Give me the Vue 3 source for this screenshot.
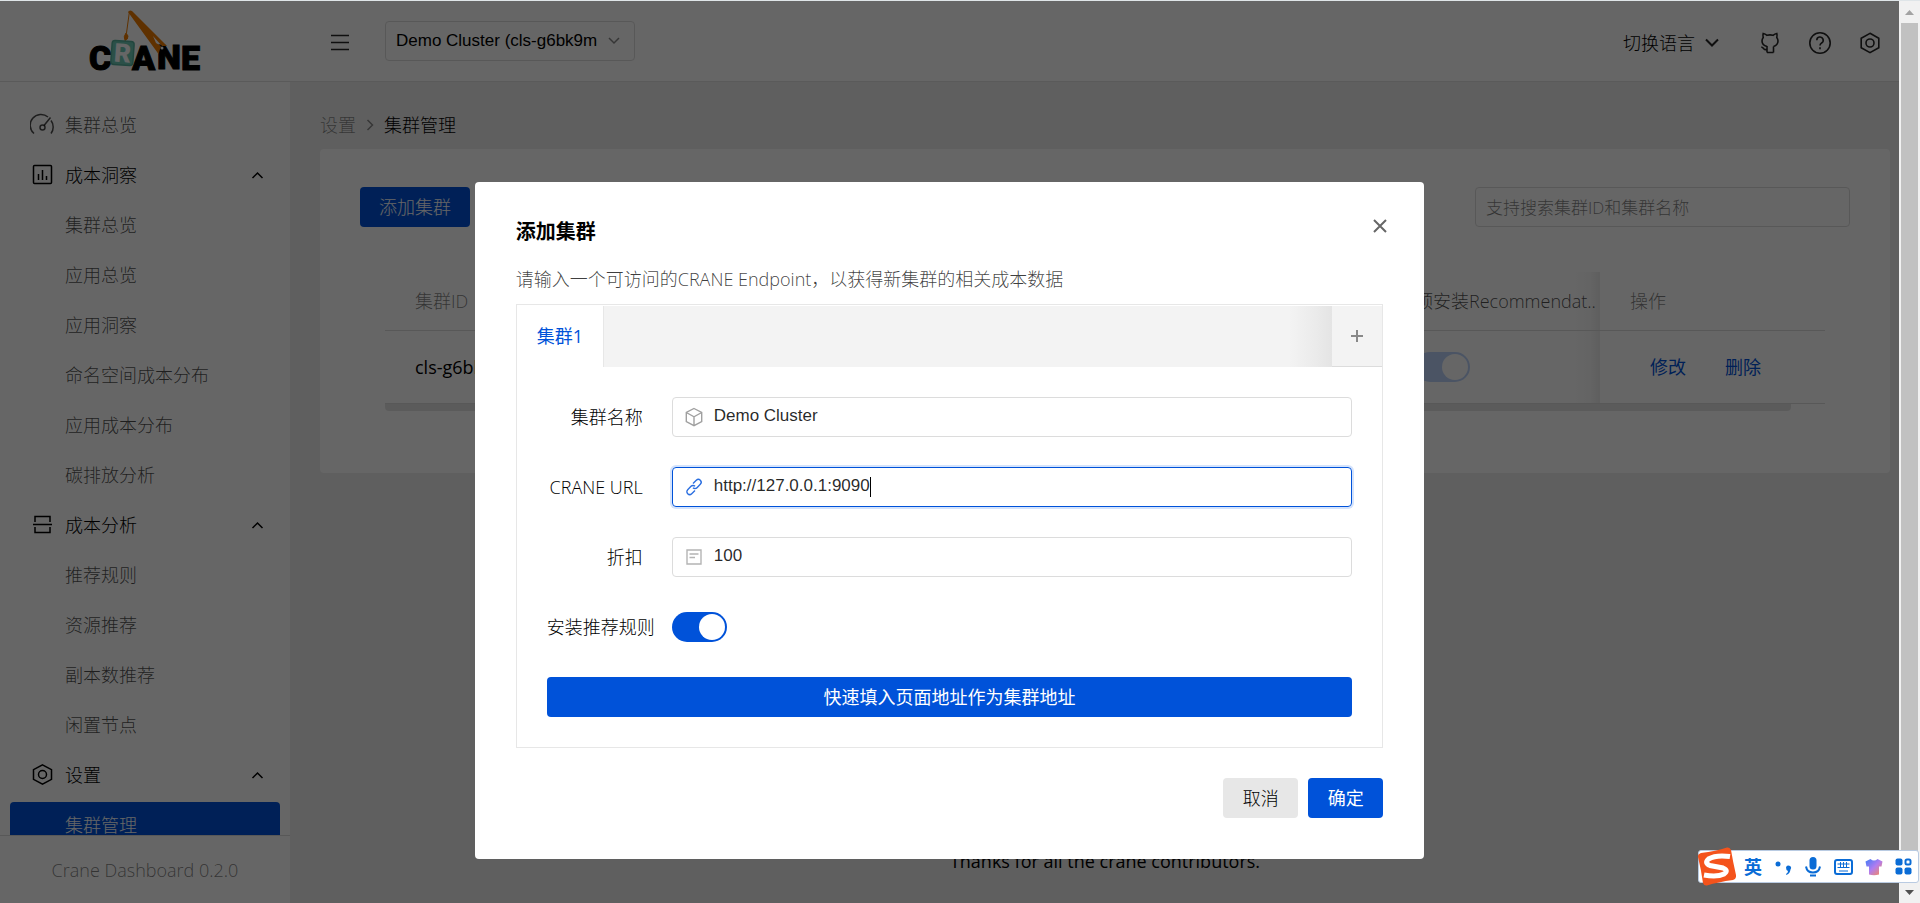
<script setup>
import { ref } from 'vue'

const menu = [
  { label: '集群总览', icon: 'gauge' },
  { label: '成本洞察', icon: 'chart', group: true },
  { label: '集群总览' },
  { label: '应用总览' },
  { label: '应用洞察' },
  { label: '命名空间成本分布' },
  { label: '应用成本分布' },
  { label: '碳排放分析' },
  { label: '成本分析', icon: 'curtain', group: true },
  { label: '推荐规则' },
  { label: '资源推荐' },
  { label: '副本数推荐' },
  { label: '闲置节点' },
  { label: '设置', icon: 'setting', group: true },
  { label: '集群管理', active: true },
]

const name = ref('Demo Cluster')
const url = ref('http://127.0.0.1:9090')
const discount = ref('100')
const install = ref(true)
</script>

<template>
  <div class="window">
    <div class="page">
      <header class="header">
        <a class="brand" href="#" aria-label="CRANE">
          <svg width="112" height="72" viewBox="0 0 112 72">
            <g class="letters">
              <text x="0" y="65">C</text>
              <text x="43" y="65">A</text>
              <text x="68" y="64">N</text>
              <text x="92" y="65">E</text>
            </g>
            <path d="M40.500 6 L37.500 28 M37 28 q-3 4 -1 7 q3 0 3 -4 z M36 35 q-1 3 4 4" fill="#ee7a00" stroke="#ee7a00" stroke-width="1" />
            <path d="M39 7 q1.500 -2.500 4 -1 L78 41 L73 41 L64 31 L67 38 L72 41 L69.500 49 z" fill="#ee7a00" />
            <circle cx="73" cy="43" r="1.500" fill="#fff" />
            <g transform="rotate(4 33 48)">
              <rect x="22.500" y="36" width="22" height="24" rx="3" fill="#6cc8b4" stroke="#55b09c" stroke-width="1.500" />
              <text class="r" x="25" y="57">R</text>
            </g>
          </svg>
        </a>
        <button class="icon-btn burger" aria-label="折叠菜单">
          <svg width="20" height="20" viewBox="0 0 20 20"><path d="M1 2.500h18M1 9.500h18M1 16.500h18" /></svg>
        </button>
        <div class="picker">
          <select aria-label="集群"><option>Demo Cluster (cls-g6bk9m</option></select>
          <svg width="14" height="10" viewBox="0 0 14 10"><path d="M2 2l5 5l5-5" /></svg>
        </div>
        <div class="tools">
          <button class="lang">
            切换语言
            <svg width="16" height="10" viewBox="0 0 16 10"><path d="M2 1.500l6 6l6-6" /></svg>
          </button>
          <button class="icon-btn" aria-label="GitHub">
            <svg width="24" height="24" viewBox="0 0 24 24">
              <path d="M9 21.500h6.500M9 21.500v-6.500M15.500 21.500v-6M9 15.500C5.500 14.500 4 12.500 4 10c0-1.500 .5-2.500 1.200-3.500C4.800 5 4.800 3.800 5.200 2.500C7 2.800 8 3.500 9 4.300c2-.5 4-.5 6 0c1-.8 2-1.500 3.800-1.800c.4 1.300 .4 2.500 0 4C19.500 7.500 20 8.500 20 10c0 2.500-1.500 4.500-4.500 5.500M9 18.500c-1.500 .3-2.500 .2-3.200-.8c-.6-.9-1-1.500-2.500-1.700" />
            </svg>
          </button>
          <button class="icon-btn" aria-label="帮助">
            <svg width="24" height="24" viewBox="0 0 24 24">
              <circle cx="12" cy="12" r="10.200" />
              <path d="M8.800 9.300a3.200 3.200 0 1 1 4.800 2.700c-1.200 .7-1.600 1.200-1.600 2.500M12 16.300v2" />
            </svg>
          </button>
          <button class="icon-btn" aria-label="页面设置">
            <svg width="24" height="24" viewBox="0 0 24 24">
              <path d="M12 2.300l8.800 4.900v9.600L12 21.700l-8.800-4.900V7.200z" /><circle cx="12" cy="12" r="4" />
            </svg>
          </button>
        </div>
      </header>

      <aside class="sidebar">
        <nav class="menu">
          <a
            v-for="(item, i) in menu"
            :key="i"
            href="#"
            class="item"
            :class="{ group: item.group, active: item.active, sub: !item.icon }"
          >
            <svg v-if="item.icon" class="glyph" width="25" height="25" viewBox="0 0 25 25">
              <g v-if="item.icon === 'gauge'">
                <path d="M4 21.500a10.700 10.700 0 0 1 14-16.500M21 8.500a10.700 10.700 0 0 1 0 13M14 13.500l6.500-8" />
                <circle cx="12.500" cy="15.500" r="2.500" />
              </g>
              <g v-else-if="item.icon === 'chart'">
                <rect x="3.500" y="3.500" width="18" height="18" rx="1" />
                <path d="M8.500 12v6M12.500 8v10M16.500 14v4" />
              </g>
              <g v-else-if="item.icon === 'curtain'">
                <path d="M3 12.500h19M5 10V4.500h15V10M5 15v5.500h15V15" />
              </g>
              <g v-else>
                <path d="M12.500 2.800l9 4.900v9.600l-9 4.900l-9-4.900V7.700z" /><circle cx="12.500" cy="12.500" r="4" />
              </g>
            </svg>
            <span>{{ item.label }}</span>
            <svg v-if="item.group" class="fold" width="25" height="12" viewBox="0 0 25 12"><path d="M7.500 9l5-5l5 5" /></svg>
          </a>
        </nav>
        <div class="version">Crane Dashboard 0.2.0</div>
      </aside>

      <main class="content">
        <nav class="crumbs">
          <a href="#">设置</a>
          <svg width="10" height="14" viewBox="0 0 10 14"><path d="M2.500 2l5 5l-5 5" /></svg>
          <span>集群管理</span>
        </nav>
        <section class="card">
          <div class="bar">
            <button class="btn primary">添加集群</button>
            <input class="search" type="text" placeholder="支持搜索集群ID和集群名称" aria-label="搜索集群" />
          </div>
          <div class="table-wrap">
            <table>
              <thead>
                <tr>
                  <th>集群ID</th>
                  <th class="wide">预安装Recommendat..</th>
                  <th class="ops">操作</th>
                </tr>
              </thead>
              <tbody>
                <tr>
                  <td>cls-g6bk9m</td>
                  <td class="wide"><input type="checkbox" class="switch" checked disabled aria-label="预安装" /></td>
                  <td class="ops"><a href="#">修改</a><a href="#">删除</a></td>
                </tr>
              </tbody>
            </table>
            <div class="hbar"></div>
          </div>
        </section>
        <footer class="thanks">Thanks for all the crane contributors.</footer>
      </main>

      <div class="mask">
        <div class="dialog" role="dialog" aria-labelledby="dlg-title">
          <div class="dlg-head">
            <h1 id="dlg-title">添加集群</h1>
            <button class="close" aria-label="关闭">
              <svg width="16" height="16" viewBox="0 0 16 16"><path d="M2 2l12 12M14 2L2 14" /></svg>
            </button>
          </div>
          <p class="hint">请输入一个可访问的CRANE Endpoint，以获得新集群的相关成本数据</p>
          <div class="tabs">
            <div class="tab-nav">
              <button class="tab">集群1</button>
              <button class="add" aria-label="新增">
                <svg width="14" height="14" viewBox="0 0 14 14"><path d="M7 1v12M1 7h12" /></svg>
              </button>
            </div>
            <form class="form" @submit.prevent>
              <div class="row">
                <label for="f-name">集群名称</label>
                <div class="field">
                  <svg width="20" height="20" viewBox="0 0 20 20"><path d="M10 1.500l7.700 4v9L10 18.700l-7.700-4.200v-9zM2.300 5.500L10 9.800l7.700-4.300M10 9.800v8.900" /></svg>
                  <input id="f-name" v-model="name" type="text" />
                </div>
              </div>
              <div class="row">
                <label for="f-url">CRANE URL</label>
                <div class="field focused">
                  <svg width="20" height="20" viewBox="0 0 20 20">
                    <path d="M9 6.500l3.300-3.200a2.800 2.800 0 0 1 4 4L13 10.700a2.800 2.800 0 0 1-4 0M11 13.500l-3.300 3.200a2.800 2.800 0 0 1-4-4L7 9.300a2.800 2.800 0 0 1 4 0" />
                  </svg>
                  <input id="f-url" v-model="url" type="text" />
                  <span class="caret"></span>
                </div>
              </div>
              <div class="row">
                <label for="f-discount">折扣</label>
                <div class="field">
                  <svg class="pale" width="20" height="20" viewBox="0 0 20 20"><path d="M3 3h14v14H3zM5.500 7h9M5.500 10.500h5.500" /></svg>
                  <input id="f-discount" v-model="discount" type="text" />
                </div>
              </div>
              <div class="row">
                <label for="f-install">安装推荐规则</label>
                <input id="f-install" v-model="install" type="checkbox" class="switch" />
              </div>
              <button type="button" class="btn primary strong">快速填入页面地址作为集群地址</button>
            </form>
          </div>
          <div class="dlg-foot">
            <button class="btn plain">取消</button>
            <button class="btn primary strong">确定</button>
          </div>
        </div>
      </div>
    </div>

    <div class="vbar">
      <svg width="9" height="5" viewBox="0 0 9 5"><path d="M4.500 0L9 5H0z" fill="#a3a3a3" /></svg>
      <div class="thumb"></div>
      <svg width="9" height="5" viewBox="0 0 9 5"><path d="M0 0h9L4.500 5z" fill="#505050" /></svg>
    </div>

    <div class="ime">
      <svg class="sogou" width="42" height="42" viewBox="0 0 42 42">
        <path d="M5 7Q20 5 31 1.500Q34 1 35 4Q37 16 40 29Q40.500 33 37 34Q22 36 11 39.500Q8 40 7 37Q5 23 2 11Q1.500 8 5 7z" fill="#f4531c" />
        <path d="M34 10.500Q20 8.500 12.500 13Q8 17 14 19.500L27 22Q33 24.500 28 28Q21 31.500 8 29" fill="none" stroke="#fff" stroke-width="5" />
      </svg>
      <span class="en">英</span>
      <svg width="18" height="18" viewBox="0 0 18 18"><circle cx="4" cy="6" r="2.500" fill="#0a6cd6" /><path d="M12 9.500a2.500 2.500 0 1 1 4.500 2q-.5 4-4 5.500l-.5-1q2-1 2-3q-2-.5-2-3.500z" fill="#0a6cd6" /></svg>
      <svg width="18" height="22" viewBox="0 0 18 22"><rect x="5.500" y="1" width="7" height="12.500" rx="3.500" fill="#0a6cd6" /><path d="M2 10.500q1 6 7 6t7-6" fill="none" stroke="#0a6cd6" stroke-width="2" /><path d="M6 19.500h6" stroke="#0a6cd6" stroke-width="2" /></svg>
      <svg width="19" height="16" viewBox="0 0 19 16"><rect x="1" y="1" width="17" height="14" rx="2" fill="none" stroke="#0a6cd6" stroke-width="2" /><path d="M3.500 5h12M3.500 8.500h12M5 12h9M6.500 3v6M9.500 3v6M12.500 3v6" stroke="#0a6cd6" stroke-width="1" /></svg>
      <svg width="18" height="18" viewBox="0 0 18 18">
        <defs><linearGradient id="shirt" x1="0" y1="0" x2="1" y2="1"><stop offset="0" stop-color="#3f7cf6" /><stop offset="0.500" stop-color="#b07cf0" /><stop offset="1" stop-color="#ff8a4c" /></linearGradient></defs>
        <path d="M5.500 1Q9 4 12.500 1L17.500 3.500L16.500 8.500H14V16.500Q9 18 4 16.500V8.500H1.500L.5 3.500z" fill="url(#shirt)" />
      </svg>
      <svg width="17" height="17" viewBox="0 0 17 17"><g fill="#0a6cd6"><rect x="0.500" y="0.500" width="7" height="7" rx="2" /><rect x="0.500" y="9.500" width="7" height="7" rx="2" /><rect x="9.500" y="9.500" width="7" height="7" rx="2" /></g><rect x="10.500" y="1.500" width="5" height="5" rx="1.500" fill="none" stroke="#0a6cd6" stroke-width="2" /></svg>
    </div>
  </div>
</template>

<style>
body {
  margin: 0;
  overflow: hidden;
}
</style>

<style scoped>
* {
  box-sizing: border-box;
}
.window {
  position: relative;
  display: flex;
  height: 100vh;
  border-top: 1px solid #dfe5e8;
  font-family: "Open Sans", "Noto Sans CJK SC", sans-serif;
  font-size: 18px;
  font-weight: 300;
  line-height: 26px;
  color: #000;
}
button,
input,
select {
  margin: 0;
  font: inherit;
  color: inherit;
}
button {
  border: 0;
  padding: 0;
  background: none;
}
a {
  color: inherit;
  text-decoration: none;
}
svg {
  display: block;
  flex: none;
}
.page {
  position: relative;
  flex: 1;
  min-width: 0;
  display: grid;
  grid-template-columns: 290px 1fr;
  grid-template-rows: auto minmax(0, 1fr);
  background: #eee;
  overflow: hidden;
}

.header {
  grid-column: 1 / -1;
  display: flex;
  align-items: center;
  height: 81px;
  padding-right: 17px;
  background: #fff;
  border-bottom: 1px solid #e0e0e0;
}
.brand {
  width: 290px;
  display: flex;
  justify-content: center;
}
.letters,
.r {
  font-family: Roboto, "Liberation Sans", sans-serif;
  font-weight: 900;
}
.letters {
  font-size: 34px;
  fill: #000;
  stroke: #000;
  stroke-width: 1px;
}
.r {
  font-size: 26px;
  fill: #fff;
}
.icon-btn svg,
.lang svg {
  fill: none;
  stroke: #262626;
  stroke-width: 1.6;
}
.lang svg {
  stroke-width: 2;
}
.burger,
.tools {
  padding-top: 3px;
}
.burger {
  margin-left: 40px;
}
.picker {
  position: relative;
  display: flex;
  align-items: center;
  width: 250px;
  margin-left: 35px;
}
.picker select {
  width: 100%;
  height: 40px;
  padding: 0 30px 0 10px;
  appearance: none;
  border: 1px solid #dcdcdc;
  border-radius: 4px;
  background: #fff;
  font-family: "Liberation Sans", sans-serif;
  font-size: 17px;
  font-weight: 400;
}
.picker svg {
  position: absolute;
  right: 14px;
  fill: none;
  stroke: #888;
  stroke-width: 1.5;
}
.tools {
  display: flex;
  align-items: center;
  gap: 26px;
  margin-left: auto;
}
.lang {
  display: flex;
  align-items: center;
  gap: 9px;
  margin-right: 12px;
}

.sidebar {
  display: flex;
  flex-direction: column;
  min-height: 0;
  background: #fff;
}
.menu {
  flex: 1;
  min-height: 0;
  overflow: hidden;
  display: flex;
  flex-direction: column;
  gap: 5px;
  padding: 20px 10px 0;
}
.item {
  flex: none;
  display: flex;
  align-items: center;
  gap: 10px;
  height: 45px;
  padding: 0 10px 0 20px;
  border-radius: 4px;
  color: rgba(0, 0, 0, 0.7);
}
.sub {
  padding-left: 55px;
}
.group {
  color: #000;
}
.active {
  background: #0052d9;
  color: #fff;
}
.glyph,
.fold {
  fill: none;
  stroke: currentColor;
  stroke-width: 1.5;
}
.fold {
  margin-left: auto;
}
.version {
  padding: 21px 0 20px;
  border-top: 1px solid #dcdcdc;
  text-align: center;
  color: rgba(0, 0, 0, 0.5);
}

.content {
  min-width: 0;
  padding: 30px 9px 0 30px;
}
.crumbs {
  display: flex;
  align-items: center;
  gap: 9px;
}
.crumbs a {
  color: rgba(0, 0, 0, 0.45);
}
.crumbs svg {
  fill: none;
  stroke: #888;
  stroke-width: 1.5;
}
.card {
  margin-top: 11px;
  padding: 38px 40px 62px;
  border-radius: 4px;
  background: #fff;
}
.bar {
  display: flex;
  justify-content: space-between;
}
.search {
  width: 375px;
  height: 40px;
  padding: 0 10px;
  border: 1px solid #dcdcdc;
  border-radius: 4px;
  background: #fff;
  font-size: 17px;
}
.search::placeholder {
  color: rgba(0, 0, 0, 0.5);
}
.btn {
  min-width: 75px;
  height: 40px;
  padding: 0 19px;
  border-radius: 4px;
  white-space: nowrap;
}
.primary {
  background: #0052d9;
  color: #fff;
}
.strong {
  font-weight: 400;
}
.plain {
  background: #e7e7e7;
}
.table-wrap {
  margin: 45px 25px 0;
}
table {
  width: 100%;
  table-layout: fixed;
  border-collapse: separate;
  border-spacing: 0;
}
th,
td {
  padding: 0 0 0 30px;
  border-bottom: 1px solid #dcdcdc;
  text-align: left;
  font-weight: 300;
  white-space: nowrap;
}
th {
  height: 59px;
  color: rgba(0, 0, 0, 0.5);
}
td {
  height: 73px;
  font-weight: 400;
}
.wide {
  width: 215px;
  overflow: hidden;
  background: linear-gradient(to left, #ececec, #fafafa 10px, #fff 28px);
}
.ops {
  width: 225px;
}
.ops a {
  margin-left: 20px;
  margin-right: 19px;
  color: #0052d9;
}
th.wide {
  color: rgba(0, 0, 0, 0.7);
}
.hbar {
  width: 1406px;
  max-width: 100%;
  height: 7px;
  border-radius: 0 0 4px 4px;
  background: #e4e4e4;
}
.thanks {
  margin-top: 375px;
  text-align: center;
  font-weight: 400;
}

.switch {
  appearance: none;
  display: block;
  width: 55px;
  height: 30px;
  padding: 2px;
  border-radius: 15px;
  background: #dcdcdc;
}
.switch::before {
  content: "";
  display: block;
  width: 26px;
  height: 26px;
  border-radius: 50%;
  background: #fff;
}
.switch:checked {
  background: #0052d9;
}
.switch:checked::before {
  margin-left: auto;
}
.switch:disabled {
  background: #bbd3fb;
}

.mask {
  position: absolute;
  inset: 0;
  display: flex;
  justify-content: center;
  align-items: flex-start;
  padding-top: 20vh;
  background: rgba(0, 0, 0, 0.6);
}
.dialog {
  width: 50%;
  padding: 36px 41px 41px;
  border-radius: 4px;
  background: #fff;
}
.dlg-head {
  display: flex;
  justify-content: space-between;
  align-items: flex-start;
}
h1 {
  margin: 0;
  font-size: 20px;
  font-weight: 700;
  line-height: 28px;
}
.close {
  margin-right: -5px;
}
.close svg,
.add svg {
  fill: none;
  stroke: #666;
  stroke-width: 2;
}
.hint {
  margin: 20px 0 12px;
  color: rgba(0, 0, 0, 0.75);
}
.tabs {
  border: 1px solid #e7e7e7;
  padding-top: 1px;
}
.tab-nav {
  display: flex;
  justify-content: space-between;
  height: 61px;
  background: #f3f3f3;
}
.tab {
  padding: 0 20px;
  border-right: 1px solid #e7e7e7;
  background: #fff;
  color: #0052d9;
  font-weight: 400;
}
.add {
  position: relative;
  display: flex;
  align-items: center;
  justify-content: center;
  width: 50px;
  border-bottom: 1px solid #dcdcdc;
}
.add::before {
  content: "";
  position: absolute;
  right: 100%;
  top: 0;
  width: 42px;
  height: 61px;
  background: linear-gradient(to left, #e4e4e4, #ebebeb 40%, #f3f3f3);
}
.add svg {
  stroke: #888;
}
.form {
  display: flex;
  flex-direction: column;
  gap: 30px;
  padding: 30px;
}
.row {
  display: flex;
  align-items: center;
  height: 40px;
}
.row label {
  flex: none;
  width: 125px;
  padding-right: 29px;
  text-align: right;
  white-space: nowrap;
}
.field {
  flex: 1;
  display: flex;
  align-items: center;
  height: 40px;
  padding: 0 11px;
  border: 1px solid #dcdcdc;
  border-radius: 4px;
}
.field svg {
  margin-right: 10px;
  fill: none;
  stroke: #a0a0a0;
  stroke-width: 1.4;
}
.field .pale {
  stroke: #b4b4b4;
}
.field input {
  flex: 1;
  min-width: 0;
  padding: 0 0 2px;
  border: 0;
  outline: 0;
  background: none;
  font-family: "Liberation Sans", sans-serif;
  font-size: 17px;
  font-weight: 400;
  color: rgba(0, 0, 0, 0.85);
}
.focused {
  border-color: #0052d9;
  box-shadow: 0 0 0 2px #d4e3fc;
}
.field.focused svg {
  stroke: #2b6fe0;
}
.focused input {
  flex: none;
  field-sizing: content;
}
.caret {
  width: 1px;
  height: 20px;
  background: #000;
}
.dlg-foot {
  display: flex;
  justify-content: flex-end;
  gap: 10px;
  margin-top: 30px;
}

.vbar {
  display: flex;
  flex-direction: column;
  align-items: center;
  gap: 8px;
  width: 21px;
  padding: 9px 0 8px;
  background: #f1f1f1;
}
.thumb {
  flex: 1;
  width: 17px;
  background: #c1c1c1;
}
.ime {
  position: absolute;
  right: 1px;
  bottom: 20px;
  display: flex;
  align-items: center;
  gap: 12px;
  height: 33px;
  padding-right: 6px;
  border: 1px solid #b9cbe2;
  border-radius: 3px;
  background: #fff;
}
.sogou {
  margin-left: -3px;
  margin-right: -6px;
}
.en {
  font-size: 18px;
  font-weight: 700;
  color: #0a6cd6;
}
</style>
